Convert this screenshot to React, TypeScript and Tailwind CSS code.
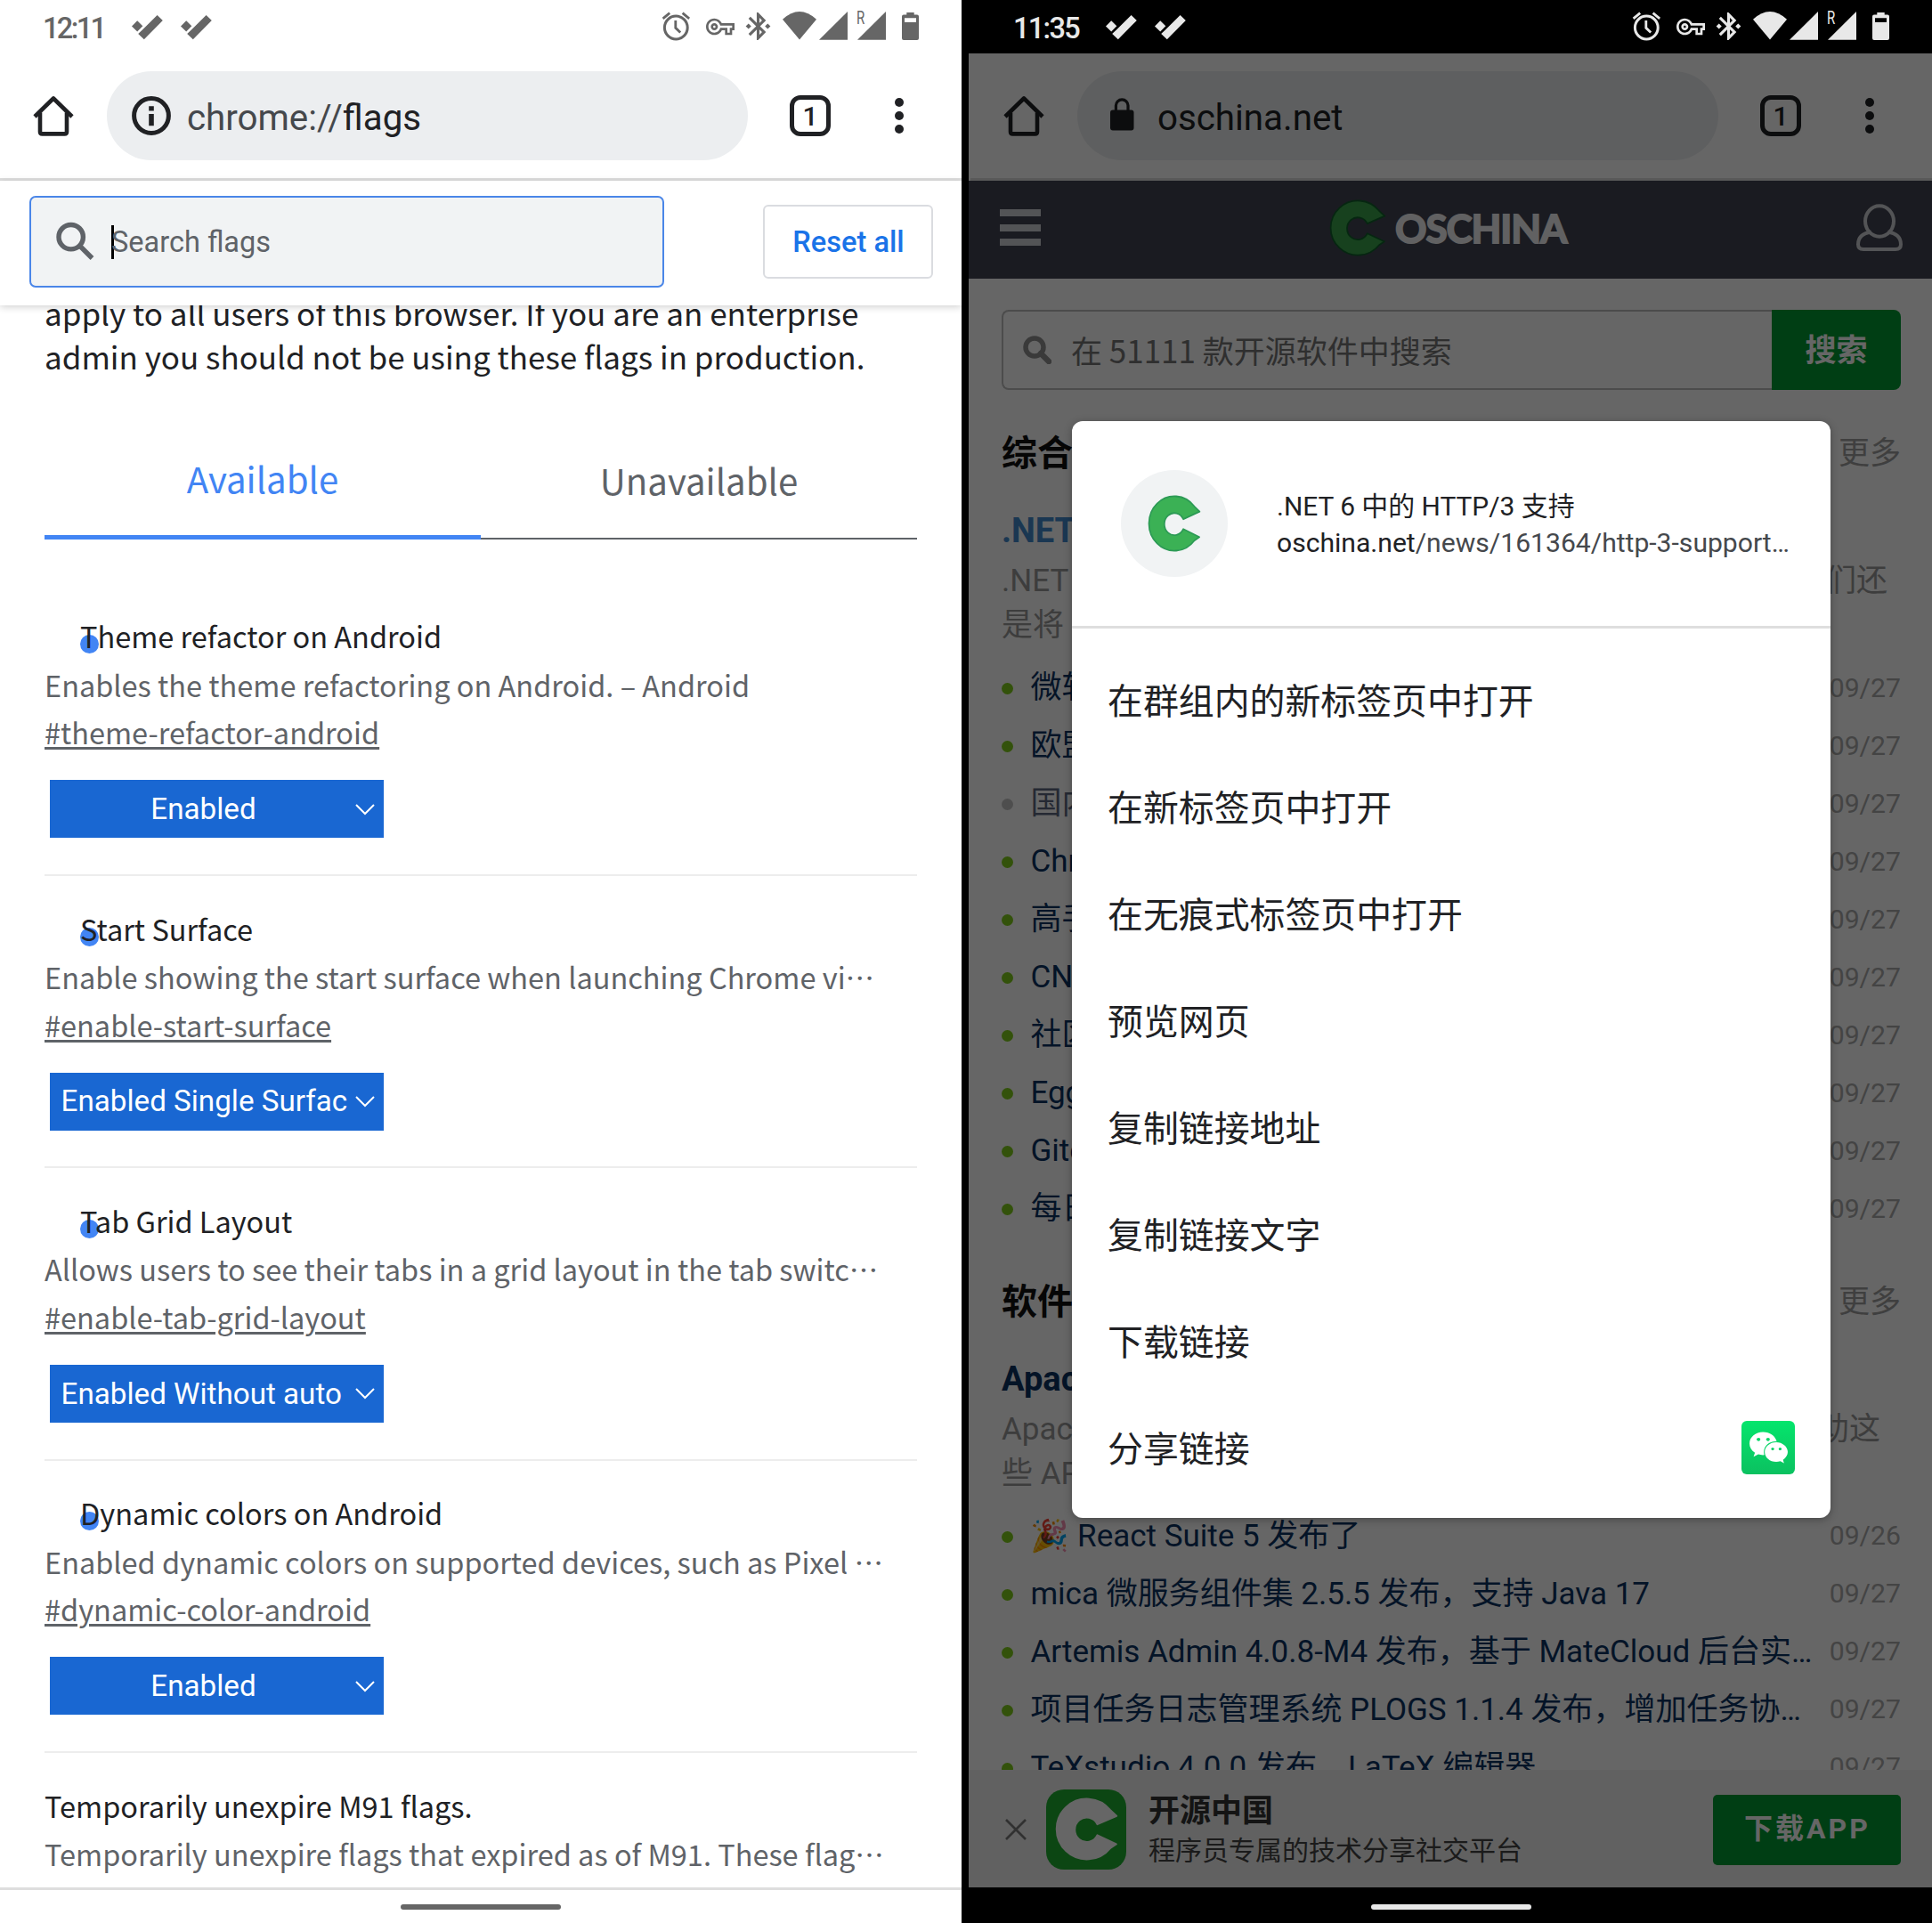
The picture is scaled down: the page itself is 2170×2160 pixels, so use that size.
import type { ReactNode } from "react";
import { MdBluetoothConnected, MdOutlineVpnKey } from "react-icons/md";
import { FaWeixin } from "react-icons/fa";

const latin = "font-[Roboto,'Noto_Sans_CJK_SC',sans-serif]";
const cjk = "font-['Noto_Sans_CJK_SC',sans-serif]";

function CheckMark() {
  return (
    <svg viewBox="0 0 35 28" className="h-[28px] w-[35px]" fill="currentColor">
      <path d="M0 12.6 6.2 6.2 12.3 12.2 6.2 18.6Z" />
      <path d="M7.2 21 13 15.4 28.6 0 34.8 6 13.8 27.2Z" />
    </svg>
  );
}

function StatusBar({ time, timeClass, colors }: { time: string; timeClass: string; colors: string }) {
  return (
    <div className={`flex h-[60px] shrink-0 pl-[48px] pr-[48px] ${colors}`}>
      <span className={`shrink-0 text-[32.5px] leading-[64px] font-medium whitespace-nowrap ${timeClass}`}>{time}</span>
      <div className="flex gap-[20px] pt-[17px]">
        <CheckMark />
        <CheckMark />
      </div>
      <div className="ml-auto flex items-start pt-[13px]">
        <svg viewBox="0 0 32 33" className="h-[33px] w-[32px]" fill="none" stroke="currentColor" strokeWidth="3">
          <circle cx="16.3" cy="18" r="12.9" />
          <path d="M15.8 10v8.3l5.4 5.2M1.6 7.8 9.2 1.6M23.6 1.6l7.6 6.2" strokeWidth="2.8" />
        </svg>
        <MdOutlineVpnKey className="ml-[18px] mt-px size-[32px]" />
        <MdBluetoothConnected className="-mt-[2px] ml-[8px] size-[37px]" />
        <svg viewBox="0 0 38 33" className="ml-[9px] h-[33px] w-[38px]" fill="currentColor">
          <path d="M0 8.7Q19-8.7 38 8.7L19 31.5Z" />
        </svg>
        <svg viewBox="0 0 32 33" className="ml-[3px] h-[33px] w-[32px]" fill="currentColor">
          <path d="M0 31.7H32V0Z" />
        </svg>
        <div className="relative ml-[10px] h-[33px] w-[33px]">
          <span className="absolute -top-[5px] left-0 origin-left scale-x-75 text-[20px] leading-[24px]">R</span>
          <svg viewBox="0 0 33 33" className="h-[33px] w-[33px]" fill="currentColor">
            <path d="M1 31.7H33V0Z" />
          </svg>
        </div>
        <svg viewBox="0 0 19 33" className="ml-[18px] h-[33px] w-[19px]" fill="currentColor" fillRule="evenodd">
          <path d="M5.3 1H13.7V3.6H17Q19 3.6 19 5.6V30Q19 32 17 32H2Q0 32 0 30V5.6Q0 3.6 2 3.6H5.3ZM3 7.3V12H16V7.3Z" />
        </svg>
      </div>
    </div>
  );
}

function Toolbar({ icon, children }: { icon: ReactNode; children: ReactNode }) {
  return (
    <div className="flex h-[143px] shrink-0 items-start border-b-[3px] border-[#dedede] pt-[20px] text-[#202124]">
      <svg viewBox="0 0 50 50" className="ml-[35px] mt-[25px] size-[50px]" fill="none" stroke="currentColor" strokeWidth="4.6" strokeLinejoin="round">
        <path d="M4 26 25 5.5 46 26" />
        <path d="M10 21.5V43Q10 45.4 12.4 45.4H37.6Q40 45.4 40 43V21.5" />
      </svg>
      <div className="ml-[35px] flex h-[100px] w-[720px] rounded-full bg-[#eceef0]">
        <div className="flex w-[90px] shrink-0 items-center pl-[27px]">{icon}</div>
        <div className="text-[40.3px] leading-[106px] whitespace-nowrap">{children}</div>
      </div>
      <div className="ml-[47px] mt-[27px] flex size-[46px] items-center justify-center rounded-[12px] border-[5px] border-current pt-[2px] text-[30px] leading-none font-medium">
        1
      </div>
      <div className="ml-[72px] mt-[30px] flex flex-col gap-[5px]">
        <i className="size-[10px] rounded-full bg-current" />
        <i className="size-[10px] rounded-full bg-current" />
        <i className="size-[10px] rounded-full bg-current" />
      </div>
    </div>
  );
}

function InfoIcon() {
  return (
    <svg viewBox="0 0 46 46" className="size-[46px]" fill="none" stroke="currentColor" strokeWidth="5">
      <circle cx="23" cy="23" r="19.4" />
      <path d="M23 12.2v5.4M23 21v13.2" strokeWidth="5.6" />
    </svg>
  );
}

function LockIcon() {
  return (
    <svg viewBox="0 0 46 46" className="size-[46px]" fill="currentColor">
      <rect x="10" y="16.5" width="26.5" height="23" rx="3" />
      <path d="M16.4 17V11.6a6.8 6.8 0 0 1 13.6 0V17" fill="none" stroke="currentColor" strokeWidth="3.2" />
    </svg>
  );
}

type FlagProps = { title: string; text: string; truncated?: boolean; link?: string; value?: string; centered?: boolean };

function Flag({ title, text, truncated, link, value, centered }: FlagProps) {
  return (
    <div className={`h-[328.33px] shrink-0 pt-[31.5px] text-[32.5px] leading-[54px] whitespace-nowrap text-[#5f6368] ${value ? "border-b-2 border-[#ededed]" : ""}`}>
      {value ? (
        <div className="relative pl-[40px] text-[#202124]">
          <i className="absolute top-[26px] left-[40px] size-[21px] rounded-full bg-[#4285f4]" />
          <span className="relative">{title}</span>
        </div>
      ) : (
        <div className="text-[#202124]">{title}</div>
      )}
      <div className="mt-[0.4px]">
        {text}
        {truncated && <span className="inline-block">…</span>}
      </div>
      {link && <div className="-mt-[0.2px] underline decoration-[2.5px] underline-offset-[3px]">{link}</div>}
      {value && (
        <div className={`mt-[26.8px] ml-[6px] flex h-[65px] w-[375px] items-center bg-[#1967d2] text-[33.2px] text-white ${latin}`}>
          <span className={centered ? "w-[345px] pt-[0.6px] text-center" : "w-[345px] pt-[0.6px] pl-[12.6px]"}>{value}</span>
          <svg viewBox="0 0 24 14" className="-ml-[3px] h-[14px] w-[24px]" fill="none" stroke="currentColor" strokeWidth="2">
            <path d="M2 2 12 12 22 2" />
          </svg>
        </div>
      )}
    </div>
  );
}

function FlagsPhone() {
  return (
    <div className={`flex h-[2160px] w-[1080px] shrink-0 flex-col overflow-hidden bg-white ${latin}`}>
      <StatusBar time="12:11" timeClass="w-[100px] tracking-[-2.6px]" colors="bg-white text-[#666666]" />
      <Toolbar icon={<InfoIcon />}>
        <span className="text-[#45484c]">chrome://</span>flags
      </Toolbar>
      <div className="relative z-10 flex h-[140px] shrink-0 items-center bg-white px-[33px] pb-[3px] shadow-[0_2px_8px_rgba(0,0,0,0.18)]">
        <div className="flex h-[103px] w-[713px] items-center rounded-[7px] border-2 border-[#4a86e8] bg-[#f1f3f4] text-[32.5px] text-[#5f6368]">
          <svg viewBox="0 0 48 48" className="mt-px ml-[26px] size-[48px]" fill="none" stroke="currentColor" strokeWidth="5.4">
            <circle cx="18.7" cy="18.2" r="13.7" />
            <path d="M29 28.5 42.5 42" strokeWidth="5.4" />
          </svg>
          <span className="ml-[16px] h-[38px] w-[3px] bg-black" />
          <span className="-ml-[3px] pt-px">Search flags</span>
        </div>
        <div className="ml-auto -mr-px flex h-[83px] w-[191px] items-center justify-center rounded-[6px] border-2 border-[#dadce0] pt-[2px] pl-px text-[32.6px] font-medium text-[#1a73e8]">
          Reset all
        </div>
      </div>
      <div className={`-mt-[17px] flex h-[1794px] shrink-0 flex-col overflow-hidden px-[50px] ${cjk}`}>
        <p className="text-[35px] leading-[49px] whitespace-nowrap text-[#202124]">
          apply to all users of this browser. If you are an enterprise
          <br />
          admin you should not be using these flags in production.
        </p>
        <div className="mt-[69px] flex h-[113px] shrink-0 text-center text-[40.2px] leading-[88px]">
          <div className="h-full w-[490px] border-b-[5px] border-[#4285f4] text-[#4285f4]">Available</div>
          <div className="h-full w-[490px] border-b-2 border-[#5f6368] pt-[2px] text-[#5f6368]">Unavailable</div>
        </div>
        <div className="mt-[49.7px] flex shrink-0 flex-col">
          <Flag title="Theme refactor on Android" text="Enables the theme refactoring on Android. – Android" link="#theme-refactor-android" value="Enabled" centered />
          <Flag title="Start Surface" text="Enable showing the start surface when launching Chrome vi" truncated link="#enable-start-surface" value="Enabled Single Surfac" />
          <Flag title="Tab Grid Layout" text="Allows users to see their tabs in a grid layout in the tab switc" truncated link="#enable-tab-grid-layout" value="Enabled Without auto" />
          <Flag title="Dynamic colors on Android" text="Enabled dynamic colors on supported devices, such as Pixel " truncated link="#dynamic-color-android" value="Enabled" centered />
          <Flag title="Temporarily unexpire M91 flags." text="Temporarily unexpire flags that expired as of M91. These flag" truncated />
        </div>
      </div>
      <div className="flex h-[40px] shrink-0 justify-center border-t-[3px] border-[#dedede] pt-[16px]">
        <i className="h-[6px] w-[180px] rounded-full bg-[#666666]" />
      </div>
    </div>
  );
}

function OscLogo({ className, colors }: { className: string; colors: string }) {
  return (
    <svg viewBox="-32 -32 64 64" preserveAspectRatio="none" className={className}>
      <path
        className={colors}
        strokeWidth="1.8"
        strokeLinejoin="round"
        d="M30.3-13.3 24-19.2A30.6 30.6 0 1 0 24 19.2L30 15.3 10.8 6.2A12 12.4 0 1 1 10.8-4.8Z"
      />
    </svg>
  );
}

function NewsRow({ text, date, muted }: { text: string; date: string; muted?: boolean }) {
  return (
    <div className="flex h-[65px] shrink-0 items-center whitespace-nowrap">
      <i className={`mt-[4px] mr-[19.4px] size-[13px] rounded-full ${muted ? "bg-[#c4c4c4]" : "bg-[#80cc1c]"}`} />
      <span className={`pt-[3px] text-[35px] ${muted ? "text-[#5c6880]" : "text-[#0b3263]"}`}>{text}</span>
      <span className="ml-auto pt-px text-[30.2px] text-[#aaaaaa]">{date}</span>
    </div>
  );
}

function Section(props: { name: string; title: string; titleClass: string; line1: [string, string]; line1Class: string; line2: string; rows: [string, string, boolean?][] }) {
  return (
    <div className="flex h-[952.6px] shrink-0 flex-col">
      <div className="flex h-[60px] items-center justify-between pt-[2px]">
        <b className="text-[40px] leading-[58px] font-bold text-[#111111]">{props.name}</b>
        <span className="text-[35px] leading-[60px] text-[#9e9e9e]">更多</span>
      </div>
      <div className={`mt-[24.8px] h-[64px] text-[38px] leading-[65px] font-bold ${props.titleClass}`}>{props.title}</div>
      <div className="text-[35px] leading-[50px] text-[#999999]">
        <div className={`flex justify-between ${props.line1Class}`}>
          <span>{props.line1[0]}</span>
          <span>{props.line1[1]}</span>
        </div>
        <div>{props.line2}</div>
      </div>
      <div className="mt-[11.4px] flex flex-col">
        {props.rows.map(([text, date, muted]) => (
          <NewsRow key={text} text={text} date={date} muted={muted} />
        ))}
      </div>
    </div>
  );
}

function SitePage() {
  return (
    <div className="flex h-[1785px] flex-col overflow-hidden">
      <div className="flex h-[110px] shrink-0 items-center bg-[#434553] pr-[32px] pl-[35px]">
        <div className="flex w-[46px] flex-col gap-[8.4px] pb-[5px]">
          <i className="h-[8px] bg-[#d0d1d6]" />
          <i className="h-[8px] bg-[#d0d1d6]" />
          <i className="h-[8px] bg-[#d0d1d6]" />
        </div>
        <OscLogo className="mb-[4px] ml-[324px] size-[64px]" colors="fill-[#3aa24b] stroke-[#10602c]" />
        <span className="ml-[10px] pb-[5px] font-[Lato] text-[44px] leading-[60px] font-bold tracking-[-1.1px] text-[#f2f2f4] [-webkit-text-stroke:1.8px_#f2f2f4]">OSCHINA</span>
        <svg viewBox="0 0 54 54" className="mb-[4px] ml-auto size-[54px]" fill="none" stroke="#d0d1d6" strokeWidth="4">
          <path d="M17.5 31.5C8 33 3 38 3 45.5Q3 51 9 51H45Q51 51 51 45.5C51 38 46 33 36.5 31.5" />
          <ellipse cx="27" cy="19.5" rx="16" ry="17.3" />
        </svg>
      </div>
      <div className="flex flex-col pt-[35px] pr-[35px] pl-[37px]">
        <div className="flex h-[90px] shrink-0">
          <div className="flex h-full w-[866px] items-center rounded-l-[8px] border-2 border-r-0 border-[#bdbdbd] pl-[22px]">
            <svg viewBox="0 0 32 32" className="size-[32px]" fill="none" stroke="#929292" strokeWidth="5.5">
              <circle cx="13" cy="13" r="10" />
              <path d="M20 20 29 29" strokeWidth="6.5" strokeLinecap="round" />
            </svg>
            <span className={`ml-[22px] text-[35px] leading-[50px] text-[#777777] ${cjk}`}>在 51111 款开源软件中搜索</span>
          </div>
          <div className="flex h-full w-[145px] items-center justify-center rounded-r-[8px] bg-[#009c33] pt-[4px] text-[35px] font-bold text-white">搜索</div>
        </div>
        <div className="mt-[41.2px] flex flex-col">
          <Section
            name="综合资讯"
            title=".NET 6"
            titleClass="text-[#4389cc]"
            line1={[".NET 6", "们还"]}
            line1Class="pr-[15px]"
            line2="是将"
            rows={[
              ["微软", "09/27"],
              ["欧盟", "09/27"],
              ["国内", "09/27", true],
              ["Chrome", "09/27"],
              ["高手", "09/27"],
              ["CNCF", "09/27"],
              ["社区", "09/27"],
              ["Egg.js", "09/27"],
              ["Gitee", "09/27"],
              ["每日", "09/27"],
            ]}
          />
          <Section
            name="软件资讯"
            title="Apache"
            titleClass="text-[#0b3263]"
            line1={["Apache", "助这"]}
            line1Class="pr-[23px]"
            line2="些 API"
            rows={[
              ["🎉 React Suite 5 发布了", "09/26"],
              ["mica 微服务组件集 2.5.5 发布，支持 Java 17", "09/27"],
              ["Artemis Admin 4.0.8-M4 发布，基于 MateCloud 后台实…", "09/27"],
              ["项目任务日志管理系统 PLOGS 1.1.4 发布，增加任务协…", "09/27"],
              ["TeXstudio 4.0.0 发布，LaTeX 编辑器", "09/27"],
            ]}
          />
        </div>
      </div>
    </div>
  );
}

function AppBanner() {
  return (
    <div className="flex h-[132px] shrink-0 items-center bg-[#f2f2f2] pt-px pr-[35px] pl-[41px]">
      <svg viewBox="0 0 24 24" className="size-[24px]" fill="none" stroke="#7a7a7a" strokeWidth="2.6">
        <path d="M1 1 23 23M23 1 1 23" />
      </svg>
      <div className="ml-[22px] flex size-[90px] items-center justify-center rounded-[20px] bg-[#20b030]">
        <OscLogo className="size-[71px]" colors="fill-white stroke-white" />
      </div>
      <div className="ml-[25px] flex flex-col">
        <b className="pt-[2px] text-[35px] leading-[46px] font-bold text-[#333333]">开源中国</b>
        <span className="text-[30px] leading-[42px] text-[#444444]">程序员专属的技术分享社交平台</span>
      </div>
      <div className="mt-px ml-auto flex h-[79px] w-[211px] items-center justify-center rounded-[5px] bg-[#009c33] pb-[3px] pl-px text-[32px] font-bold tracking-[3px] text-white">
        下载APP
      </div>
    </div>
  );
}

const menu = ["在群组内的新标签页中打开", "在新标签页中打开", "在无痕式标签页中打开", "预览网页", "复制链接地址", "复制链接文字", "下载链接"];

function ContextMenu() {
  return (
    <div className="absolute top-[413px] left-[116px] flex h-[1232px] w-[852px] flex-col rounded-[12px] bg-white shadow-[0_2px_10px_rgba(0,0,0,0.3)]">
      <div className="flex h-[233px] shrink-0 border-b-[3px] border-[#dedede] pt-[55px] pl-[55px]">
        <div className="flex size-[120px] items-center justify-center rounded-full bg-[#f1f3f4]">
          <OscLogo className="h-[64px] w-[60px]" colors="fill-[#3bb155] stroke-[#2c9a55]" />
        </div>
        <div className="ml-[55px] flex flex-col pt-[20px] text-[30.1px] leading-[41px] whitespace-nowrap text-[#202124]">
          <div className="text-[29.9px]">.NET 6 中的 HTTP/3 支持</div>
          <div>
            oschina.net<span className="text-[#45484c]">/news/161364/http-3-support…</span>
          </div>
        </div>
      </div>
      <div className={`flex flex-col pt-[19px] pl-[40px] text-[39.9px] leading-[120px] text-[#202124] ${cjk}`}>
        {menu.map((item) => (
          <div key={item}>{item}</div>
        ))}
        <div className="flex items-center justify-between pr-[40px]">
          <span>分享链接</span>
          <div className="mt-[1px] flex size-[60px] items-center justify-center rounded-[6px] bg-linear-to-b from-[#04e56c] to-[#0bc160] text-white">
            <FaWeixin className="h-[40px] w-[45px]" />
          </div>
        </div>
      </div>
    </div>
  );
}

function SitePhone() {
  return (
    <div className={`flex h-[2160px] w-[1082px] shrink-0 flex-col overflow-hidden bg-black ${latin}`}>
      <div className="pl-[2px]">
        <StatusBar time="11:35" timeClass="w-[104px] tracking-[-1.7px]" colors="bg-black text-[#e8e8e8]" />
      </div>
      <div className="relative flex h-[2060px] shrink-0 flex-col bg-white">
        <div className="pl-[2px]">
          <Toolbar icon={<LockIcon />}>oschina.net</Toolbar>
        </div>
        <SitePage />
        <AppBanner />
        <div className="absolute inset-0 bg-black/60" />
        <ContextMenu />
      </div>
      <div className="flex h-[40px] shrink-0 justify-center pt-[19px] pl-[2px]">
        <i className="h-[6px] w-[180px] rounded-full bg-[#e8e8e8]" />
      </div>
    </div>
  );
}

export default function App() {
  return (
    <div className="flex h-[2160px] w-[2170px] gap-[8px] overflow-hidden bg-black">
      <FlagsPhone />
      <SitePhone />
    </div>
  );
}
